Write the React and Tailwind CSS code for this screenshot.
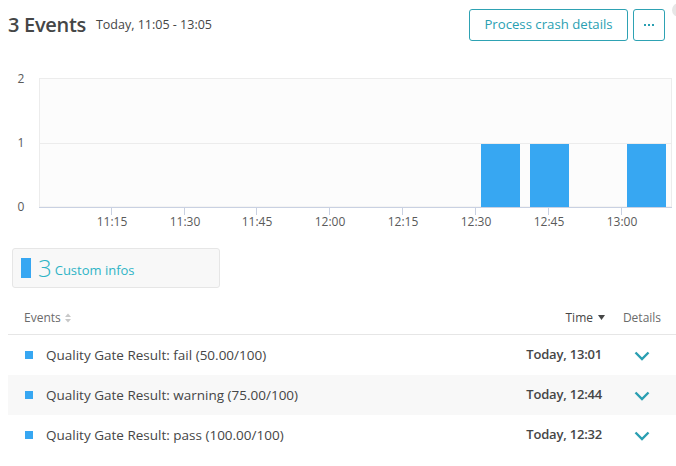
import React from "react";

const ticks = [
  [111, "11:15"],
  [184, "11:30"],
  [256, "11:45"],
  [329, "12:00"],
  [402, "12:15"],
  [475, "12:30"],
  [548, "12:45"],
  [621, "13:00"],
];

const rows = [
  ["Quality Gate Result: fail (50.00/100)", "Today, 13:01", false],
  ["Quality Gate Result: warning (75.00/100)", "Today, 12:44", true],
  ["Quality Gate Result: pass (100.00/100)", "Today, 12:32", false],
];

function Chevron() {
  return (
    <svg width="16" height="10" viewBox="0 0 16 10">
      <path d="M1.5 1.5 L8 8 L14.5 1.5" fill="none" stroke="#2a9fb2" strokeWidth="2.4" />
    </svg>
  );
}

export default function App() {
  return (
    <div
      className="relative w-[676px] h-[466px] overflow-hidden bg-white text-[#454646]"
      style={{ fontFamily: '"Open Sans", "Liberation Sans", sans-serif' }}
    >
      <div className="absolute right-[-10px] top-[3px] w-[14px] h-[14px] rounded-full bg-[#e6e6e6]" />
      {/* header */}
      <div className="flex items-center h-[32px] mt-[9px] pl-[8px] pr-[11px]">
        <div className="text-[20px] font-semibold leading-none tracking-[-0.3px] text-[#454646]">3 Events</div>
        <div className="ml-[10px] text-[12.5px] leading-none text-[#454646]">Today, 11:05 - 13:05</div>
        <div className="ml-auto flex gap-[5px]">
          <button className="h-[32px] w-[159px] rounded-[3px] border border-[#2ea2b3] text-[13.2px] text-[#2a9fb2]">
            Process crash details
          </button>
          <button className="h-[32px] w-[32px] rounded-[3px] border border-[#2ea2b3] text-[12px] text-[#2a9fb2] flex items-center justify-center">
            <svg width="12" height="4" viewBox="0 0 12 4">
              <rect x="1" y="1" width="2" height="2" fill="#2a9fb2" />
              <rect x="5" y="1" width="2" height="2" fill="#2a9fb2" />
              <rect x="9" y="1" width="2" height="2" fill="#2a9fb2" />
            </svg>
          </button>
        </div>
      </div>

      {/* chart */}
      <svg width="676" height="180" className="block mt-[19px]" style={{ fontFamily: '"Open Sans", "Liberation Sans", sans-serif' }}>
        <rect x="39.5" y="18.5" width="632" height="128.5" fill="#fcfcfc" stroke="#ececec" />
        <line x1="40" y1="83.5" x2="672" y2="83.5" stroke="#ececec" />
        <rect x="481" y="84" width="39" height="63" fill="#37a7f2" />
        <rect x="530" y="84" width="39" height="63" fill="#37a7f2" />
        <rect x="627" y="84" width="39" height="63" fill="#37a7f2" />
        <line x1="39" y1="147.5" x2="672" y2="147.5" stroke="#c9d1e2" />
        {ticks.map(([x, l]) => (
          <g key={l}>
            <line x1={x + 0.5} y1="147" x2={x + 0.5} y2="155" stroke="#c9d1e2" />
            <text x={x + 1} y="166" textAnchor="middle" fontSize="12" fill="#5a5a5a">
              {l}
            </text>
          </g>
        ))}
        <text x="21" y="23" textAnchor="middle" fontSize="12" fill="#5a5a5a">2</text>
        <text x="21" y="87" textAnchor="middle" fontSize="12" fill="#5a5a5a">1</text>
        <text x="21" y="151" textAnchor="middle" fontSize="12" fill="#5a5a5a">0</text>
      </svg>

      {/* custom infos */}
      <div className="ml-[12px] mt-[8px] w-[208px] h-[40px] rounded-[3px] border border-[#e6e6e6] bg-[#f8f8f8] flex items-center pl-[8px]">
        <div className="w-[10px] h-[20px] bg-[#37a7f2]" />
        <span className="ml-[7px] text-[24px] font-light leading-none text-[#2fb4c6]">3</span>
        <span className="ml-[3px] mt-[4px] text-[13px] leading-none text-[#2fb4c6]">Custom infos</span>
      </div>

      {/* table */}
      <div className="ml-[8px] mt-[13px]">
        <div className="flex items-center h-[34px] border-b border-[#e6e6e6] text-[12px] text-[#6b6b6b]">
          <div className="pl-[16px] flex items-center gap-[4px] flex-1">
            <span>Events</span>
            <svg width="6" height="10" viewBox="0 0 6 10">
              <path d="M0 4 L3 0.5 L6 4 Z" fill="#c8c8c8" />
              <path d="M0 6 L3 9.5 L6 6 Z" fill="#c8c8c8" />
            </svg>
          </div>
          <div className="flex items-center gap-[5px] pr-[7px] text-[#454646]">
            <span>Time</span>
            <svg width="7" height="5" viewBox="0 0 7 5">
              <path d="M0 0 L7 0 L3.5 5 Z" fill="#454646" />
            </svg>
          </div>
          <div className="w-[64px] text-center pr-[4px]">Details</div>
        </div>
        {rows.map(([t, time, shade]) => (
          <div key={t} className={`flex items-center h-[40px] ${shade ? "bg-[#f8f8f8]" : ""}`}>
            <div className="pl-[17px] flex items-center flex-1">
              <div className="w-[8px] h-[8px] bg-[#37a7f2]" />
              <span className="ml-[13px] text-[13.5px]">{t}</span>
            </div>
            <div className="font-semibold pr-[10px] text-[13px] tracking-[-0.2px]">{time}</div>
            <div className="w-[64px] flex justify-center pr-[4px] pt-[2px]">
              <Chevron />
            </div>
          </div>
        ))}
      </div>
    </div>
  );
}
